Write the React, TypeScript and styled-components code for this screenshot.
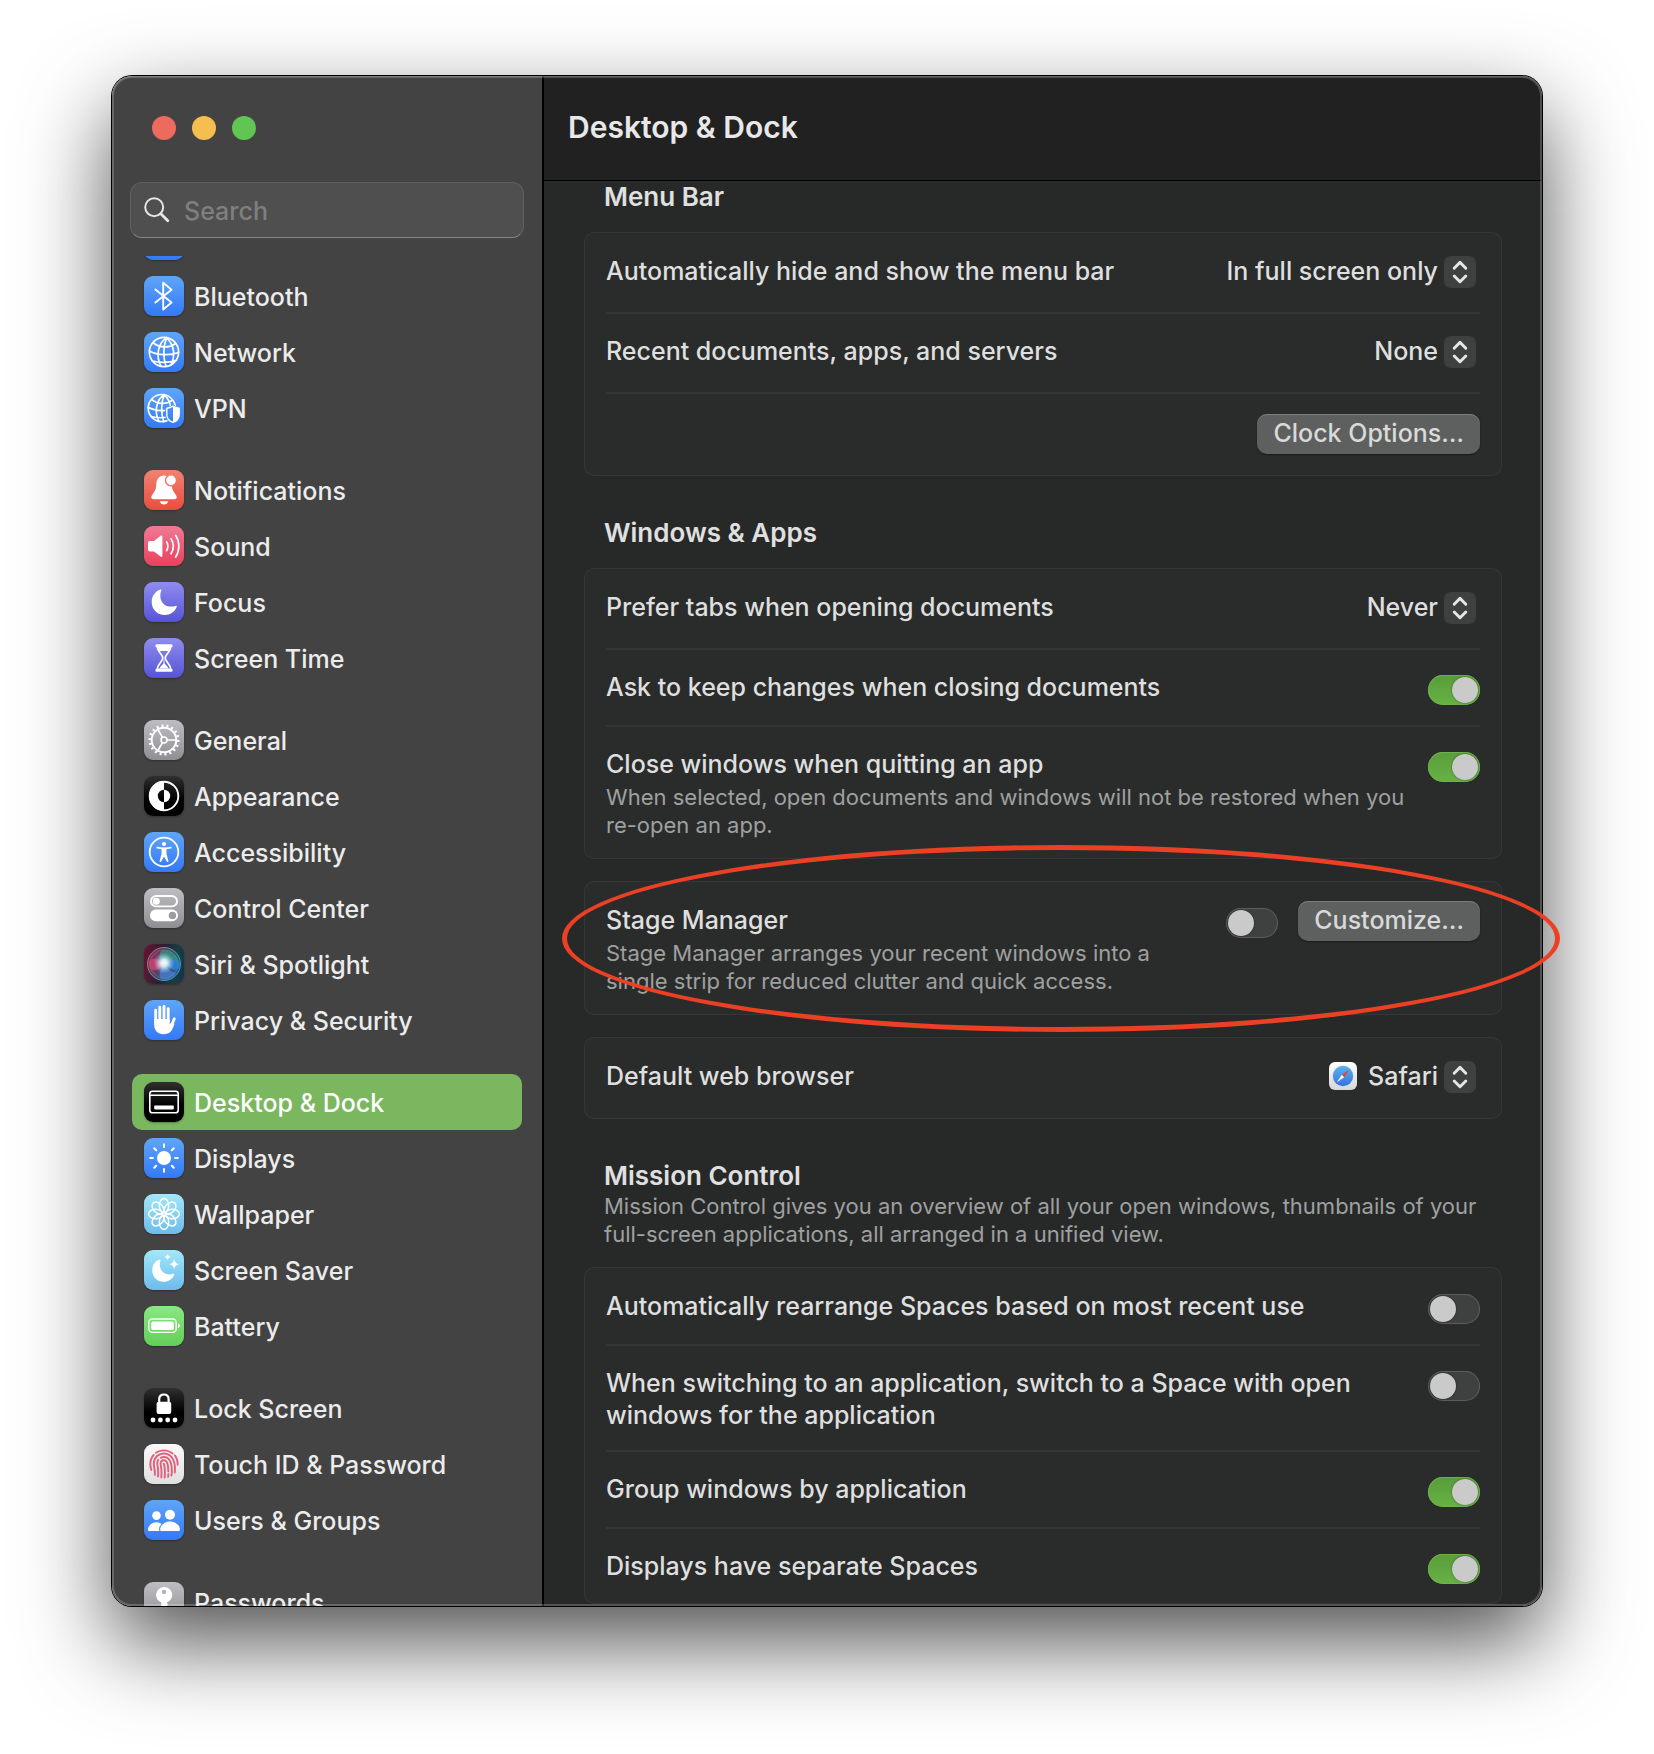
import React, { useId } from "react";
import styled, { createGlobalStyle, css } from "styled-components";
import { IoIosFingerPrint } from "react-icons/io";

const GlobalStyle = createGlobalStyle`
  * { box-sizing: border-box; }
  body {
    margin: 0;
    background: #fff;
    font-family: "Inter", "Liberation Sans", sans-serif;
    font-size: 25px;
    line-height: 32px;
    font-weight: 500;
  }
  button, input, select { font: inherit; }
  h1, h2, p, ul { margin: 0; padding: 0; }
`;

/* ---------- window ---------- */

const Page = styled.div`
  min-height: 100vh;
  padding: 76px 112px 148px;
`;

const Frame = styled.div`
  position: relative;
  height: calc(100vh - 224px);
  border-radius: 20px;
  box-shadow: 0 0 0 1px #000, 0 36px 88px rgba(0, 0, 0, 0.69);
`;

const Panes = styled.div`
  display: flex;
  height: 100%;
  border-radius: 20px;
  overflow: hidden;

  &::after {
    content: "";
    position: absolute;
    inset: 0;
    border-radius: 20px;
    box-shadow: inset 0 0 0 2px rgba(255, 255, 255, 0.2), inset 0 1px 0 rgba(255, 255, 255, 0.14);
    pointer-events: none;
  }
`;

const Highlight = styled.div`
  position: absolute;
  top: 769px;
  left: 450px;
  right: -18px;
  height: 187px;
  border: 5px solid #ec4025;
  border-radius: 50%;
  pointer-events: none;
`;

/* ---------- sidebar ---------- */

const Sidebar = styled.aside`
  flex: none;
  display: flex;
  flex-direction: column;
  width: 432px;
  border-right: 2px solid #000;
  background: #434343;
`;

const Lights = styled.div`
  flex: none;
  display: flex;
  gap: 16px;
  padding: 40px 40px 42px;
`;

const Light = styled.button<{ $color: string }>`
  width: 24px;
  height: 24px;
  padding: 0;
  border: 0;
  border-radius: 50%;
  background: ${(p) => p.$color};
`;

const SearchBox = styled.label`
  flex: none;
  display: flex;
  align-items: center;
  gap: 14px;
  height: 56px;
  margin: 0 18px 18px;
  padding: 0 13px;
  border: 1px solid #606060;
  border-bottom-color: #868686;
  border-radius: 12px;
  background: #4f4f4f;
`;

const SearchInput = styled.input`
  flex: 1;
  min-width: 0;
  padding: 2px 0 0;
  border: 0;
  outline: 0;
  background: transparent;
  color: #ececec;

  &::placeholder {
    color: #7f7f7f;
    opacity: 1;
  }
`;

const ListViewport = styled.nav`
  flex: 1;
  min-height: 0;
  overflow: hidden;
`;

const ListContent = styled.div`
  display: flex;
  flex-direction: column;
  gap: 26px;
  margin-top: -44px;
  padding: 0 20px;
`;

const Group = styled.ul`
  list-style: none;
`;

const Item = styled.a<{ $active: boolean }>`
  display: flex;
  align-items: center;
  gap: 10px;
  height: 56px;
  padding: 0 12px;
  border-radius: 10px;
  color: #ececec;
  text-decoration: none;
  white-space: nowrap;
  ${(p) =>
    p.$active &&
    css`
      background: #7bb75f;
      color: #fff;
    `}
`;

const ItemName = styled.span`
  padding-top: 2px;
`;

const Tile = styled.span<{ $fill: string }>`
  flex: none;
  display: flex;
  align-items: center;
  justify-content: center;
  width: 40px;
  height: 40px;
  border-radius: 9px;
  background: ${(p) => p.$fill};
  box-shadow: 0 1px 2px rgba(0, 0, 0, 0.3);
  overflow: hidden;
`;

/* ---------- main pane ---------- */

const Main = styled.main`
  flex: 1;
  min-width: 0;
  display: flex;
  flex-direction: column;
  background: #272928;
`;

const Toolbar = styled.header`
  flex: none;
  display: flex;
  align-items: center;
  height: 105px;
  padding: 0 24px 2px;
  border-bottom: 1px solid #000;
  background: #212121;
`;

const Title = styled.h1`
  color: #e8e8e8;
  font-size: 30px;
  line-height: 36px;
  font-weight: 600;
`;

const Scroller = styled.div`
  flex: 1;
  min-height: 0;
  overflow: hidden;
`;

const Content = styled.div`
  margin-top: -1px;
  padding: 0 40px;
`;

const Section = styled.section`
  margin-bottom: 40px;
`;

const SectionHead = styled.div`
  padding: 1px 20px 19px;
`;

const SectionTitle = styled.h2`
  color: #e0e0e0;
  font-size: 26px;
  line-height: 32px;
  font-weight: 600;
`;

const Caption = styled.p`
  color: #9fa0a0;
  font-size: 22px;
  line-height: 28px;
  font-weight: 400;
`;

const Cards = styled.div`
  display: flex;
  flex-direction: column;
  gap: 22px;
`;

const Card = styled.div`
  padding: 0 22px;
  border-radius: 10px;
  background: #2a2c2b;
  box-shadow: inset 0 0 0 1px #353736;
`;

const Row = styled.div`
  display: flex;
  align-items: flex-start;
  gap: 16px;
  min-height: 77px;
  padding: 21px 0 19px;
  border-top: 2px solid #343635;

  &:first-child {
    border-top-color: transparent;
  }

  &:only-child {
    min-height: 82px;
  }
`;

const ButtonRow = styled(Row)`
  justify-content: flex-end;
  padding: 20px 0 22px;
`;

const RowText = styled.div`
  flex: 1;
  min-width: 0;
`;

const RowLabel = styled.label`
  display: block;
  color: #dfdfdf;
`;

const RowCaption = styled(Caption)`
  margin: 3px 0 1px;
`;

const Controls = styled.div`
  flex: none;
  display: flex;
  align-items: center;
  gap: 20px;
  margin-top: -3px;
`;

const PushButton = styled.button`
  flex: none;
  height: 40px;
  padding: 0 16px 2px;
  border: 0;
  border-radius: 10px;
  background: #5e605f;
  color: #d9d9d9;
  box-shadow: inset 0 1px 0 #7c7e7d, 0 1px 2px rgba(0, 0, 0, 0.4);
  white-space: nowrap;
`;

const Toggle = styled.input.attrs({ type: "checkbox", role: "switch" })`
  appearance: none;
  flex: none;
  width: 52px;
  height: 30px;
  margin: 4px 0 0;
  padding: 2px;
  border-radius: 15px;
  background: #3f4141;
  box-shadow: inset 0 0 0 1px #5c5e5d;

  &::before {
    content: "";
    display: block;
    width: 26px;
    height: 26px;
    border-radius: 50%;
    background: #cacaca;
    box-shadow: 0 0 2px rgba(0, 0, 0, 0.5);
  }

  &:checked {
    background: linear-gradient(#599c3b, #67b244);
    box-shadow: inset 0 0 0 1px #6db04d;
  }

  &:checked::before {
    margin-left: auto;
  }
`;

const Popup = styled.div`
  flex: none;
  position: relative;
  display: flex;
  align-items: center;
  gap: 11px;
  margin-bottom: 6px;
`;

const PopupSelect = styled.select`
  appearance: none;
  field-sizing: content;
  height: 32px;
  padding: 0 42px 0 0;
  border: 0;
  outline: 0;
  background: transparent;
  color: #dfdfdf;
  text-align-last: right;
`;

const PopupArrows = styled.span`
  position: absolute;
  top: 1px;
  right: 4px;
  display: flex;
  width: 32px;
  height: 32px;
  border-radius: 7px;
  background: #3f4140;
  pointer-events: none;
`;

/* ---------- icons ---------- */

const Glyph = ({ children, size = 40 }: { children: React.ReactNode; size?: number }) => (
  <svg width={size} height={size} viewBox="0 0 40 40" fill="none" aria-hidden="true">
    {children}
  </svg>
);

const stroke = { stroke: "#fff", strokeLinecap: "round", strokeLinejoin: "round" } as const;

const BLUE = "linear-gradient(#60a5f8, #3379f6)";
const RED = "linear-gradient(#f08273, #ea4d3d)";
const PINK = "linear-gradient(#f07a95, #ea3f5c)";
const INDIGO = "linear-gradient(#8f8cf0, #5654d6)";
const GRAY = "linear-gradient(#bdbdc2, #8f8e93)";
const BLACK = "linear-gradient(#303030, #000 60%)";
const SKY = "linear-gradient(#a2e8fa, #6dbbeb)";
const GREEN = "linear-gradient(#8ae782, #62cf58)";
const WHITE = "linear-gradient(#fafafa, #dfdfdf)";
const SIRI = "linear-gradient(100deg, #6d1230 0%, #2a2036 45%, #173f42 75%, #14304e 100%)";

const WifiIcon = () => (
  <Glyph>
    <path {...stroke} strokeWidth="3" d="M7 16c7.500-7 18.500-7 26 0M12 21c4.500-4.400 11.500-4.400 16 0" />
    <circle cx="20" cy="27" r="3" fill="#fff" />
  </Glyph>
);

const BluetoothIcon = () => (
  <Glyph>
    <path {...stroke} strokeWidth="1.9" d="M11.400 13.600 27.500 26.600 19.200 33.600V6.600l8.300 7.200-16.100 12.800" />
  </Glyph>
);

const GlobeLines = () => (
  <>
    <circle cx="20" cy="20" r="14.600" />
    <path d="M22.500 5.600C14 11 11.500 24 17 34.300M22.500 5.600C19.500 14 19 25 22 34.500M22.500 5.600C30.500 13 31.500 24 27 32.800M9 10.500c6 5.500 16 6 22.500 1M5.400 19c8 4.500 21 4.800 29.200 1.500M8.500 29c6.500 1.600 16.500 1.700 24-.800" />
  </>
);

const NetworkIcon = () => (
  <Glyph>
    <g {...stroke} strokeWidth="1.700">
      <GlobeLines />
    </g>
  </Glyph>
);

const VpnIcon = () => {
  const id = useId();
  const shield = "M29 18.200c2 1.300 4 1.900 6.200 2v6.500c0 3.800-2.500 6.300-6.200 7.700-3.700-1.400-6.200-3.900-6.200-7.700v-6.500c2.200-.1 4.200-.7 6.200-2z";
  return (
    <Glyph>
      <mask id={id}>
        <rect width="40" height="40" fill="#fff" />
        <path d={shield} fill="#000" stroke="#000" strokeWidth="3" />
      </mask>
      <g {...stroke} strokeWidth="1.800" mask={`url(#${id})`}>
        <g transform="translate(-.8 1.500) scale(.93)">
          <GlobeLines />
        </g>
      </g>
      <path d={shield} {...stroke} strokeWidth="1.400" />
      <path d="M29 18.200c2 1.300 4 1.900 6.200 2v6.500c0 3.800-2.500 6.300-6.200 7.700z" fill="#fff" />
    </Glyph>
  );
};

const BellIcon = () => {
  const id = useId();
  return (
    <Glyph>
      <mask id={id}>
        <rect width="40" height="40" fill="#fff" />
        <circle cx="27" cy="10.400" r="6.200" fill="#000" />
      </mask>
      <path
        mask={`url(#${id})`}
        fill="#fff"
        d="M20 5.400c-4.800 0-7.400 3.700-7.700 8.600-.3 5.200-1 6.900-3.500 9.900-1.200 1.500-1.500 2.500-1.500 3.400 0 1.300.800 2 2.200 2h21c1.400 0 2.200-.700 2.200-2 0-.900-.3-1.900-1.500-3.400-2.500-3-3.200-4.700-3.500-9.900-.3-4.900-2.900-8.600-7.700-8.600z"
      />
      <path fill="#fff" d="M15.800 31.200h8.400c-.4 2-2 3.300-4.200 3.300s-3.800-1.300-4.200-3.300z" />
      <circle cx="27" cy="10.400" r="4.800" fill="#fff" />
    </Glyph>
  );
};

const SoundIcon = () => (
  <Glyph>
    <path fill="#fff" d="M4 17c0-1.300.7-2 2-2h4l6.500-5.200c1-.8 1.900-.4 1.900.9v19c0 1.300-.9 1.700-1.900.9L10 25.400H6c-1.300 0-2-.7-2-2z" />
    <path {...stroke} strokeWidth="1.700" d="M22.600 15.900c1.600 2.600 1.600 6 0 8.600M27 12.600c2.900 4.600 2.900 10.600 0 15.200M31.700 9.400c4.200 6.600 4.200 15 0 21.600" />
  </Glyph>
);

const MoonIcon = () => (
  <Glyph>
    <path
      fill="#fff"
      d="M16.400 7.600C11.200 9.400 7.700 14.100 7.700 19.900 7.700 27.200 13.400 33 20.700 33c5.500 0 10-3.100 12-8 .3-.9-.3-1.400-1.200-1.100-1.300.5-2.700.7-4.200.7-6.800 0-11-4.500-11-11.200 0-1.800.4-3.300 1-4.800.3-.8-.1-1.300-.9-1z"
    />
  </Glyph>
);

const HourglassIcon = () => (
  <Glyph>
    <path {...stroke} strokeWidth="1.700" d="M13.300 8.500c0 5.500 5.500 8 5.500 11.500s-5.500 6-5.500 11.500h13.400c0-5.500-5.500-8-5.500-11.500s5.500-6 5.500-11.500z" />
    <path fill="#fff" d="M13 7h14c0 2.500-.8 4.300-2.200 6H15.200C13.800 11.300 13 9.500 13 7zM20 19l.6 6.500c.8 1.600 3.300 2.500 4 5h-9.200c.7-2.500 3.200-3.400 4-5z" />
    <path {...stroke} strokeWidth="3" d="M12.800 7.700h14.400M12.800 32.200h14.400" />
  </Glyph>
);

const GearIcon = () => (
  <Glyph>
    <circle cx="20" cy="20" r="12.300" stroke="#fff" strokeWidth="1.900" />
    <circle cx="20" cy="20" r="14.300" stroke="#fff" strokeWidth="2.600" pathLength="54" strokeDasharray="1.200 1.800" />
    <circle cx="20" cy="20" r="3" stroke="#fff" strokeWidth="1.500" />
    <path {...stroke} strokeWidth="1.700" d="M23 20h9.500M18.500 17.400l-4.800-8.200M18.500 22.600l-4.800 8.200" />
  </Glyph>
);

const AppearanceIcon = () => (
  <Glyph>
    <circle cx="20" cy="20" r="14.300" stroke="#fff" strokeWidth="1.900" />
    <path fill="#fff" d="M20 5a15 15 0 0 0 0 30v-8.800a6.200 6.200 0 0 1 0-12.400z" />
    <path fill="#fff" d="M20 13.800a6.200 6.200 0 0 1 0 12.400z" />
  </Glyph>
);

const AccessibilityIcon = () => (
  <Glyph>
    <circle cx="20" cy="20" r="14.300" stroke="#fff" strokeWidth="1.800" />
    <circle cx="20" cy="12" r="2.100" fill="#fff" />
    <path {...stroke} strokeWidth="1.700" d="M13.200 15.600l5 .8h3.600l5-.8" />
    <path {...stroke} strokeWidth="1.700" fill="#fff" d="M18.400 16.600v5.200l-2 7.400 3.600-6.400 3.600 6.400-2-7.400v-5.200z" />
  </Glyph>
);

const ControlCenterIcon = () => (
  <Glyph>
    <rect x="7" y="8" width="26" height="10.400" rx="5.200" stroke="#fff" strokeWidth="1.900" />
    <circle cx="12.300" cy="13.200" r="3.500" fill="#fff" />
    <rect x="6" y="21.600" width="28" height="11.600" rx="5.800" fill="#fff" />
    <circle cx="28.400" cy="27.400" r="3.700" fill="#9c9ca1" />
  </Glyph>
);

const SiriIcon = () => {
  const id = useId();
  return (
    <Glyph>
      <defs>
        <radialGradient id={`${id}g`} cx=".5" cy=".5" r=".5">
          <stop offset="0" stopColor="#fff" />
          <stop offset=".35" stopColor="#e6fbff" stopOpacity=".85" />
          <stop offset="1" stopColor="#7fd6e8" stopOpacity="0" />
        </radialGradient>
        <linearGradient id={`${id}o`} x1="0" y1=".3" x2="1" y2=".7">
          <stop offset="0" stopColor="#c83a6c" />
          <stop offset=".45" stopColor="#6a5a88" />
          <stop offset="1" stopColor="#2c7fd0" />
        </linearGradient>
        <linearGradient id={`${id}r`} x1="0" y1="0" x2="1" y2="1">
          <stop offset="0" stopColor="#b5637a" />
          <stop offset=".5" stopColor="#3fae94" />
          <stop offset="1" stopColor="#3f8fd4" />
        </linearGradient>
      </defs>
      <circle cx="20" cy="20" r="16.500" fill={`url(#${id}o)`} opacity=".6" />
      <path fill="#2fa98c" opacity=".6" d="M20 20C13 14 15 6 21 6s13 6 14 13c-5-2-10-2-15 1z" />
      <path fill="#2f7de0" opacity=".85" d="M20 20c6-5 13-5 16 0-1 7-6 6-8 5s-5-3-8-5z" />
      <path fill="#d63c74" opacity=".8" d="M20 20c-5-6-12-8-15-2 0 8 3 9 7 8s6-4 8-6z" />
      <path fill="#4a7cd8" opacity=".75" d="M20 20c-4 5-6 10-3 15 6 2 12-1 15-6-5-1-9-4-12-9z" />
      <circle cx="20" cy="20" r="16.500" stroke={`url(#${id}r)`} strokeWidth="1" />
      <circle cx="20" cy="20" r="14" stroke={`url(#${id}r)`} strokeWidth=".7" opacity=".6" />
      <circle cx="20" cy="19" r="10.500" fill={`url(#${id}g)`} />
    </Glyph>
  );
};

const HandIcon = () => (
  <Glyph>
    <path {...stroke} strokeWidth="2.900" d="M11.700 10.200V24M15.800 7.200V22M20 6.500V22M24.200 8.600V22M30.300 18.800 26.500 28" />
    <path fill="#fff" d="M10.250 19h15.400v5.200l3.200-3.400 1.600 3.400-2.400 5.600c-1.300 2.800-4 4.400-8.200 4.400-6.200 0-9.600-3.600-9.600-9.200z" />
  </Glyph>
);

const DockIcon = () => (
  <Glyph>
    <rect x="5.800" y="9.200" width="28.400" height="21.600" rx="2.600" stroke="#fff" strokeWidth="1.600" />
    <path stroke="#fff" strokeWidth="1.400" d="M6 13.200h28" />
    <rect x="10.200" y="23.400" width="19.600" height="4" rx="1" fill="#fff" />
  </Glyph>
);

const SunIcon = () => (
  <Glyph>
    <circle cx="20" cy="20" r="7" fill="#fff" />
    <path {...stroke} strokeWidth="2" d="M20 9V6.200M20 31v2.800M9 20H6.200M31 20h2.800M12.200 12.200l-2-2M27.800 27.800l2 2M12.200 27.800l-2 2M27.800 12.200l2-2" />
  </Glyph>
);

const FlowerIcon = () => (
  <Glyph>
    {[0, 45, 90, 135, 180, 225, 270, 315].map((angle) => (
      <ellipse key={angle} cx="20" cy="11.600" rx="4.700" ry="7" stroke="#fff" strokeWidth="1.500" transform={`rotate(${angle} 20 20)`} />
    ))}
  </Glyph>
);

const ScreenSaverIcon = () => (
  <Glyph>
    <path
      fill="#fff"
      d="M15.300 9.500C11 11.200 8.200 15.300 8.200 20.200c0 6.500 5 11.600 11.500 11.600 4.800 0 8.900-2.700 10.600-7 .3-.8-.3-1.300-1.100-1-1.100.4-2.400.6-3.700.6-6 0-9.700-4-9.700-10 0-1.500.3-2.800.7-4 .2-.7-.4-1.200-1.200-.9z"
    />
    <path fill="#fff" d="M30.200 9c.6 3.200 1.700 4.400 5 5.200-3.300.8-4.400 2-5 5.200-.6-3.200-1.700-4.400-5-5.200 3.300-.8 4.400-2 5-5.200zM23.600 3.600c.4 2 1.100 2.800 3.200 3.300-2.100.5-2.800 1.300-3.200 3.300-.4-2-1.100-2.800-3.200-3.300 2.100-.5 2.800-1.300 3.200-3.300z" />
  </Glyph>
);

const BatteryIcon = () => (
  <Glyph>
    <rect x="4.800" y="13" width="27.400" height="13.400" rx="3.600" stroke="#fff" strokeWidth="1.400" />
    <rect x="7.200" y="15.400" width="22.600" height="8.600" rx="1.700" fill="#fff" />
    <path fill="#fff" d="M34 17.400c1.300.4 2 1.300 2 2.300s-.7 1.900-2 2.300z" />
  </Glyph>
);

const LockIcon = () => (
  <Glyph>
    <rect x="12.600" y="13.800" width="14.600" height="12.200" rx="2" fill="#fff" />
    <path stroke="#fff" strokeWidth="2.200" d="M15.200 14.500v-3.300c0-2.900 1.900-4.700 4.700-4.700s4.700 1.800 4.700 4.700v3.300" />
    {[9, 16.400, 23.700, 31].map((x) => (
      <circle key={x} cx={x} cy="32" r="2.400" fill="#fff" />
    ))}
  </Glyph>
);

const UsersIcon = () => {
  const id = useId();
  const front = "M26 21.400c5.200 0 9.900 3.800 9.900 8 0 1-.6 1.500-1.700 1.500H17.800c-1.100 0-1.700-.5-1.700-1.500 0-4.200 4.700-8 9.900-8z";
  return (
    <Glyph>
      <mask id={id}>
        <rect width="40" height="40" fill="#fff" />
        <path d={front} fill="#000" stroke="#000" strokeWidth="2" />
      </mask>
      <circle cx="12.500" cy="15.600" r="4.300" fill="#fff" />
      <path mask={`url(#${id})`} fill="#fff" d="M12.500 22.300c4.500 0 8.300 3.200 8.300 8.600H5.700c-1 0-1.700-.5-1.700-1.500 0-3.600 3.800-7.100 8.500-7.100z" />
      <circle cx="26" cy="14.700" r="5" fill="#fff" />
      <path d={front} fill="#fff" />
    </Glyph>
  );
};

const KeyIcon = () => (
  <Glyph>
    <path fill="#fff" fillRule="evenodd" d="M20 5a8 8 0 0 0-2.700 15.500V34l2.700 3 4-4-2.400-2.700L24 28l-2.400-3 2.400-2.400-1.300-2A8 8 0 0 0 20 5zm0 2.700a2.200 2.200 0 1 1 0 4.400 2.200 2.200 0 0 1 0-4.400z" />
  </Glyph>
);

const SafariIcon = () => {
  const id = useId();
  return (
    <svg width="28" height="28" viewBox="0 0 28 28" aria-hidden="true">
      <defs>
        <linearGradient id={`${id}p`} x1="0" y1="0" x2="0" y2="1">
          <stop offset="0" stopColor="#fff" />
          <stop offset="1" stopColor="#d6d6d6" />
        </linearGradient>
        <linearGradient id={`${id}d`} x1="0" y1="0" x2="0" y2="1">
          <stop offset="0" stopColor="#5ab4ec" />
          <stop offset="1" stopColor="#3572dd" />
        </linearGradient>
      </defs>
      <rect width="28" height="28" rx="6" fill={`url(#${id}p)`} />
      <circle cx="14" cy="14" r="10.200" fill={`url(#${id}d)`} />
      <path fill="#e8453c" d="M20.400 7.600 12.800 12.800l2.400 2.400z" />
      <path fill="#f3f3f3" d="M7.600 20.400l7.600-5.200-2.400-2.400z" />
    </svg>
  );
};

const SearchIcon = () => (
  <svg width="26" height="26" viewBox="0 0 26 26" fill="none" aria-hidden="true">
    <circle cx="10.200" cy="10.200" r="9" stroke="#e6e6e6" strokeWidth="2" />
    <path d="M16.800 16.800l7 7" stroke="#e6e6e6" strokeWidth="2.800" strokeLinecap="round" />
  </svg>
);

/* ---------- data ---------- */

type Entry = { name: string; fill: string; icon: React.ReactNode; iconOnly?: boolean };

const groups: Entry[][] = [
  [
    { name: "Wi-Fi", fill: BLUE, icon: <WifiIcon />, iconOnly: true },
    { name: "Bluetooth", fill: BLUE, icon: <BluetoothIcon /> },
    { name: "Network", fill: BLUE, icon: <NetworkIcon /> },
    { name: "VPN", fill: BLUE, icon: <VpnIcon /> },
  ],
  [
    { name: "Notifications", fill: RED, icon: <BellIcon /> },
    { name: "Sound", fill: PINK, icon: <SoundIcon /> },
    { name: "Focus", fill: INDIGO, icon: <MoonIcon /> },
    { name: "Screen Time", fill: INDIGO, icon: <HourglassIcon /> },
  ],
  [
    { name: "General", fill: GRAY, icon: <GearIcon /> },
    { name: "Appearance", fill: BLACK, icon: <AppearanceIcon /> },
    { name: "Accessibility", fill: BLUE, icon: <AccessibilityIcon /> },
    { name: "Control Center", fill: GRAY, icon: <ControlCenterIcon /> },
    { name: "Siri & Spotlight", fill: SIRI, icon: <SiriIcon /> },
    { name: "Privacy & Security", fill: BLUE, icon: <HandIcon /> },
  ],
  [
    { name: "Desktop & Dock", fill: BLACK, icon: <DockIcon /> },
    { name: "Displays", fill: BLUE, icon: <SunIcon /> },
    { name: "Wallpaper", fill: SKY, icon: <FlowerIcon /> },
    { name: "Screen Saver", fill: SKY, icon: <ScreenSaverIcon /> },
    { name: "Battery", fill: GREEN, icon: <BatteryIcon /> },
  ],
  [
    { name: "Lock Screen", fill: BLACK, icon: <LockIcon /> },
    { name: "Touch ID & Password", fill: WHITE, icon: <IoIosFingerPrint size={36} color="#e2607b" /> },
    { name: "Users & Groups", fill: BLUE, icon: <UsersIcon /> },
  ],
  [{ name: "Passwords", fill: GRAY, icon: <KeyIcon /> }],
];

/* ---------- setting rows ---------- */

const PopupRow = ({ label, options, icon }: { label: string; options: string[]; icon?: React.ReactNode }) => {
  const id = useId();
  return (
    <Row>
      <RowText>
        <RowLabel htmlFor={id}>{label}</RowLabel>
      </RowText>
      <Popup>
        {icon}
        <PopupSelect id={id} defaultValue={options[0]}>
          {options.map((o) => (
            <option key={o}>{o}</option>
          ))}
        </PopupSelect>
        <PopupArrows>
          <svg width="32" height="32" viewBox="0 0 32 32" fill="none" aria-hidden="true">
            <path d="M10.200 12.200 16 6.400l5.800 5.800M10.200 20 16 25.800l5.800-5.800" stroke="#e6e6e6" strokeWidth="2.900" strokeLinecap="round" strokeLinejoin="round" />
          </svg>
        </PopupArrows>
      </Popup>
    </Row>
  );
};

const ToggleRow = ({ label, caption, on, action }: { label: string; caption?: string; on?: boolean; action?: string }) => {
  const id = useId();
  return (
    <Row>
      <RowText>
        <RowLabel htmlFor={id}>{label}</RowLabel>
        {caption && <RowCaption>{caption}</RowCaption>}
      </RowText>
      {action ? (
        <Controls>
          <Toggle id={id} defaultChecked={on} />
          <PushButton type="button">{action}</PushButton>
        </Controls>
      ) : (
        <Toggle id={id} defaultChecked={on} />
      )}
    </Row>
  );
};

export default function App() {
  return (
    <Page>
      <GlobalStyle />
      <Frame>
        <Panes>
          <Sidebar>
            <Lights>
              <Light type="button" $color="#ed6a5e" aria-label="Close" />
              <Light type="button" $color="#f5bf4f" aria-label="Minimize" />
              <Light type="button" $color="#61c554" aria-label="Zoom" />
            </Lights>
            <SearchBox>
              <SearchIcon />
              <SearchInput type="text" placeholder="Search" aria-label="Search" />
            </SearchBox>
            <ListViewport>
              <ListContent>
                {groups.map((group) => (
                  <Group key={group[0].name}>
                    {group.map((entry) => (
                      <li key={entry.name}>
                        <Item href="#" $active={entry.name === "Desktop & Dock"} aria-label={entry.name}>
                          <Tile $fill={entry.fill}>{entry.icon}</Tile>
                          {!entry.iconOnly && <ItemName>{entry.name}</ItemName>}
                        </Item>
                      </li>
                    ))}
                  </Group>
                ))}
              </ListContent>
            </ListViewport>
          </Sidebar>
          <Main>
            <Toolbar>
              <Title>Desktop &amp; Dock</Title>
            </Toolbar>
            <Scroller>
              <Content>
                <Section>
                  <SectionHead>
                    <SectionTitle>Menu Bar</SectionTitle>
                  </SectionHead>
                  <Card>
                    <PopupRow label="Automatically hide and show the menu bar" options={["In full screen only", "Always", "Never"]} />
                    <PopupRow label="Recent documents, apps, and servers" options={["None", "5", "10"]} />
                    <ButtonRow>
                      <PushButton type="button">Clock Options…</PushButton>
                    </ButtonRow>
                  </Card>
                </Section>
                <Section>
                  <SectionHead>
                    <SectionTitle>Windows &amp; Apps</SectionTitle>
                  </SectionHead>
                  <Cards>
                    <Card>
                      <PopupRow label="Prefer tabs when opening documents" options={["Never", "Always"]} />
                      <ToggleRow label="Ask to keep changes when closing documents" on />
                      <ToggleRow
                        label="Close windows when quitting an app"
                        caption="When selected, open documents and windows will not be restored when you re-open an app."
                        on
                      />
                    </Card>
                    <Card>
                      <ToggleRow
                        label="Stage Manager"
                        caption="Stage Manager arranges your recent windows into a single strip for reduced clutter and quick access."
                        action="Customize…"
                      />
                    </Card>
                    <Card>
                      <PopupRow label="Default web browser" options={["Safari"]} icon={<SafariIcon />} />
                    </Card>
                  </Cards>
                </Section>
                <Section>
                  <SectionHead>
                    <SectionTitle>Mission Control</SectionTitle>
                    <Caption>
                      Mission Control gives you an overview of all your open windows, thumbnails of your full-screen
                      applications, all arranged in a unified view.
                    </Caption>
                  </SectionHead>
                  <Card>
                    <ToggleRow label="Automatically rearrange Spaces based on most recent use" />
                    <ToggleRow label="When switching to an application, switch to a Space with open windows for the application" />
                    <ToggleRow label="Group windows by application" on />
                    <ToggleRow label="Displays have separate Spaces" on />
                  </Card>
                </Section>
              </Content>
            </Scroller>
          </Main>
        </Panes>
        <Highlight />
      </Frame>
    </Page>
  );
}
